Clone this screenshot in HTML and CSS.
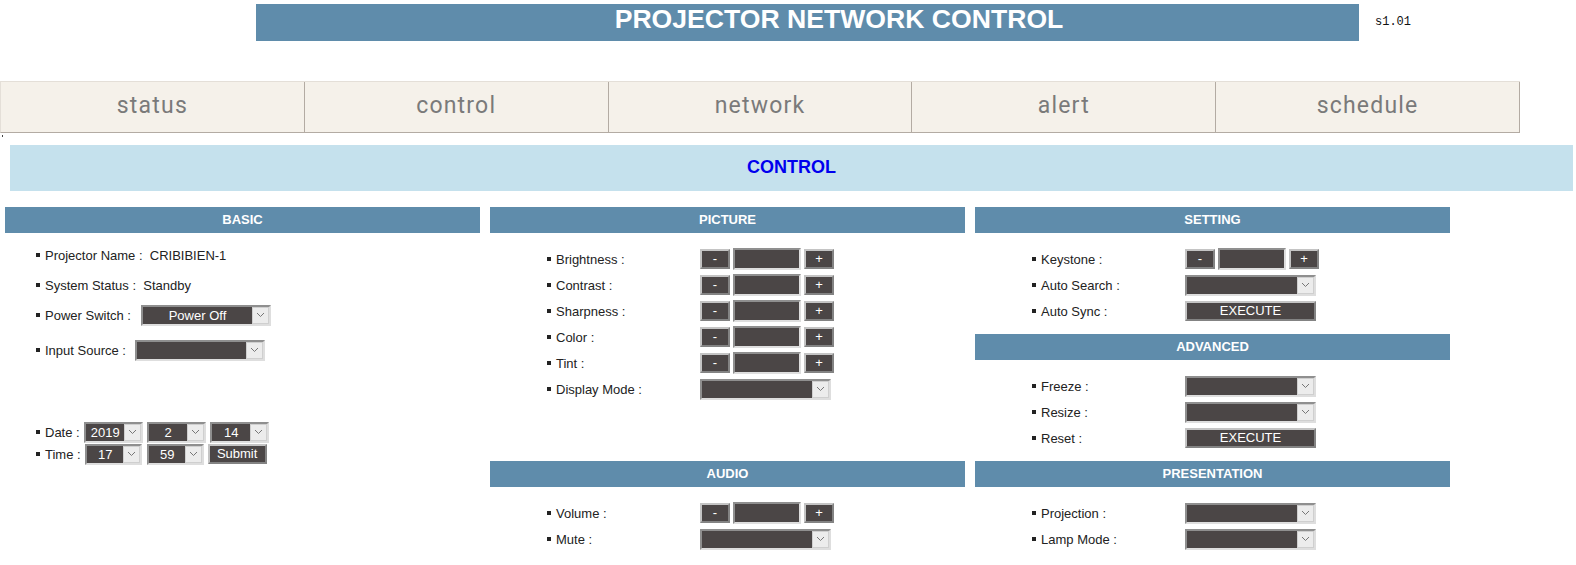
FILE: index.html
```html
<!DOCTYPE html>
<html>
<head>
<meta charset="utf-8">
<link rel="stylesheet" href="styles.css">
</head>
<body>
<div class="top">
  <div class="titlebar">PROJECTOR NETWORK CONTROL</div>
  <div class="ver">s1.01</div>
</div>

<div class="nav">
  <div class="tab">status</div>
  <div class="tab">control</div>
  <div class="tab">network</div>
  <div class="tab">alert</div>
  <div class="tab">schedule</div>
</div>
<div class="dotline"><span class="dot"></span></div>

<div class="pagebar">CONTROL</div>

<div class="panels">
  <section class="panel basic">
    <div class="ph">BASIC</div>
    <div class="bbody">
      <div class="brow"><span class="bul"></span>Projector Name :&nbsp; CRIBIBIEN-1</div>
      <div class="brow"><span class="bul"></span>System Status :&nbsp; Standby</div>
      <div class="brow"><span class="bul"></span>Power Switch :<span class="sel w130 ml10"><span class="sv">Power Off</span><span class="sa"><svg width="9" height="6" viewBox="0 0 9 6"><polyline points="1,1 4.5,4.5 8,1" fill="none" stroke="#777" stroke-width="1"/></svg></span></span></div>
      <div class="brow r4"><span class="bul"></span>Input Source :<span class="sel w130 ml9"><span class="sv"></span><span class="sa"><svg width="9" height="6" viewBox="0 0 9 6"><polyline points="1,1 4.5,4.5 8,1" fill="none" stroke="#777" stroke-width="1"/></svg></span></span></div>
      <div class="drow dfirst"><span class="bul"></span>Date :
        <span class="sel w59 ml4"><span class="sv">2019</span><span class="sa"><svg width="9" height="6" viewBox="0 0 9 6"><polyline points="1,1 4.5,4.5 8,1" fill="none" stroke="#777" stroke-width="1"/></svg></span></span>
        <span class="sel w59 ml4"><span class="sv">2</span><span class="sa"><svg width="9" height="6" viewBox="0 0 9 6"><polyline points="1,1 4.5,4.5 8,1" fill="none" stroke="#777" stroke-width="1"/></svg></span></span>
        <span class="sel w59 ml4"><span class="sv">14</span><span class="sa"><svg width="9" height="6" viewBox="0 0 9 6"><polyline points="1,1 4.5,4.5 8,1" fill="none" stroke="#777" stroke-width="1"/></svg></span></span>
      </div>
      <div class="drow"><span class="bul"></span>Time :
        <span class="sel w58 ml4"><span class="sv">17</span><span class="sa"><svg width="9" height="6" viewBox="0 0 9 6"><polyline points="1,1 4.5,4.5 8,1" fill="none" stroke="#777" stroke-width="1"/></svg></span></span>
        <span class="sel w58 ml5"><span class="sv">59</span><span class="sa"><svg width="9" height="6" viewBox="0 0 9 6"><polyline points="1,1 4.5,4.5 8,1" fill="none" stroke="#777" stroke-width="1"/></svg></span></span>
        <span class="btn submit ml4">Submit</span>
      </div>
    </div>
  </section>

  <section class="panel picture">
    <div class="ph">PICTURE</div>
    <div class="pbody">
      <div class="row"><span class="lab"><span class="bul"></span>Brightness :</span><span class="ctl"><span class="btn pm">-</span><span class="valbox"></span><span class="btn pm">+</span></span></div>
      <div class="row"><span class="lab"><span class="bul"></span>Contrast :</span><span class="ctl"><span class="btn pm">-</span><span class="valbox"></span><span class="btn pm">+</span></span></div>
      <div class="row"><span class="lab"><span class="bul"></span>Sharpness :</span><span class="ctl"><span class="btn pm">-</span><span class="valbox"></span><span class="btn pm">+</span></span></div>
      <div class="row"><span class="lab"><span class="bul"></span>Color :</span><span class="ctl"><span class="btn pm">-</span><span class="valbox"></span><span class="btn pm">+</span></span></div>
      <div class="row"><span class="lab"><span class="bul"></span>Tint :</span><span class="ctl"><span class="btn pm">-</span><span class="valbox"></span><span class="btn pm">+</span></span></div>
      <div class="row"><span class="lab"><span class="bul"></span>Display Mode :</span><span class="ctl"><span class="sel w131"><span class="sv"></span><span class="sa"><svg width="9" height="6" viewBox="0 0 9 6"><polyline points="1,1 4.5,4.5 8,1" fill="none" stroke="#777" stroke-width="1"/></svg></span></span></span></div>
    </div>
  </section>

  <div class="stack">
    <section class="panel">
      <div class="ph">SETTING</div>
      <div class="pbody">
        <div class="row"><span class="lab"><span class="bul"></span>Keystone :</span><span class="ctl"><span class="btn pm">-</span><span class="valbox"></span><span class="btn pm">+</span></span></div>
        <div class="row"><span class="lab"><span class="bul"></span>Auto Search :</span><span class="ctl"><span class="sel w131"><span class="sv"></span><span class="sa"><svg width="9" height="6" viewBox="0 0 9 6"><polyline points="1,1 4.5,4.5 8,1" fill="none" stroke="#777" stroke-width="1"/></svg></span></span></span></div>
        <div class="row"><span class="lab"><span class="bul"></span>Auto Sync :</span><span class="ctl"><span class="btn exec">EXECUTE</span></span></div>
      </div>
    </section>
    <section class="panel">
      <div class="ph">ADVANCED</div>
      <div class="pbody">
        <div class="row"><span class="lab"><span class="bul"></span>Freeze :</span><span class="ctl"><span class="sel w131"><span class="sv"></span><span class="sa"><svg width="9" height="6" viewBox="0 0 9 6"><polyline points="1,1 4.5,4.5 8,1" fill="none" stroke="#777" stroke-width="1"/></svg></span></span></span></div>
        <div class="row"><span class="lab"><span class="bul"></span>Resize :</span><span class="ctl"><span class="sel w131"><span class="sv"></span><span class="sa"><svg width="9" height="6" viewBox="0 0 9 6"><polyline points="1,1 4.5,4.5 8,1" fill="none" stroke="#777" stroke-width="1"/></svg></span></span></span></div>
        <div class="row"><span class="lab"><span class="bul"></span>Reset :</span><span class="ctl"><span class="btn exec">EXECUTE</span></span></div>
      </div>
    </section>
  </div>

  <section class="panel">
    <div class="ph">AUDIO</div>
    <div class="pbody">
      <div class="row"><span class="lab"><span class="bul"></span>Volume :</span><span class="ctl"><span class="btn pm">-</span><span class="valbox"></span><span class="btn pm">+</span></span></div>
      <div class="row"><span class="lab"><span class="bul"></span>Mute :</span><span class="ctl"><span class="sel w131"><span class="sv"></span><span class="sa"><svg width="9" height="6" viewBox="0 0 9 6"><polyline points="1,1 4.5,4.5 8,1" fill="none" stroke="#777" stroke-width="1"/></svg></span></span></span></div>
    </div>
  </section>

  <section class="panel">
    <div class="ph">PRESENTATION</div>
    <div class="pbody">
      <div class="row"><span class="lab"><span class="bul"></span>Projection :</span><span class="ctl"><span class="sel w131"><span class="sv"></span><span class="sa"><svg width="9" height="6" viewBox="0 0 9 6"><polyline points="1,1 4.5,4.5 8,1" fill="none" stroke="#777" stroke-width="1"/></svg></span></span></span></div>
      <div class="row"><span class="lab"><span class="bul"></span>Lamp Mode :</span><span class="ctl"><span class="sel w131"><span class="sv"></span><span class="sa"><svg width="9" height="6" viewBox="0 0 9 6"><polyline points="1,1 4.5,4.5 8,1" fill="none" stroke="#777" stroke-width="1"/></svg></span></span></span></div>
    </div>
  </section>
</div>
</body>
</html>
```

FILE: styles.css
```css
html, body {
  margin: 0;
  padding: 0;
  background: #fff;
  font-family: "Liberation Sans", Arial, sans-serif;
  font-size: 13px;
  color: #222;
  overflow: hidden;
}

.top {
  display: flex;
  align-items: center;
  padding-top: 4px;
  padding-left: 256px;
}
.titlebar {
  width: 1103px;
  height: 37px;
  background: #5f8cab;
  color: #fff;
  font-weight: bold;
  font-size: 26.6px;
  line-height: 30px;
  text-align: center;
  box-sizing: border-box;
  padding-left: 63px;
}
.ver {
  margin-left: 16px;
  font-family: "Liberation Mono", monospace;
  font-size: 12px;
  color: #111;
  padding-bottom: 1px;
}

.nav {
  display: flex;
  width: 1520px;
  margin-top: 40px;
  background: #f5f1ea;
  border-top: 1px solid #e4dfd8;
  border-bottom: 1px solid #b3aba3;
  border-left: 1px solid #e4dfd8;
  box-sizing: border-box;
}
.tab {
  flex: 1;
  height: 50px;
  line-height: 47px;
  text-align: center;
  font-family: Roboto, "Liberation Sans", sans-serif;
  font-size: 23px;
  letter-spacing: 1.2px;
  color: #7a7a7a;
  border-right: 1px solid #b3aba3;
}

.dotline {
  height: 12px;
  position: relative;
}
.dot {
  position: absolute;
  left: 2px;
  top: 2px;
  width: 1px;
  height: 2px;
  background: #444;
}

.pagebar {
  margin: 0 3px 0 10px;
  height: 46px;
  line-height: 44px;
  background: #c5e1ed;
  color: #0000ee;
  font-weight: bold;
  font-size: 18px;
  text-align: center;
}

.panels {
  display: grid;
  grid-template-columns: 475px 475px 475px;
  grid-template-rows: 244px auto;
  column-gap: 10px;
  row-gap: 10px;
  margin: 16px 0 0 5px;
}
.basic {
  grid-row: 1 / span 2;
}
.stack {
  display: flex;
  flex-direction: column;
  gap: 10px;
}

.ph {
  height: 26px;
  line-height: 25px;
  background: #5f8cab;
  color: #fff;
  font-weight: bold;
  font-size: 13px;
  text-align: center;
}

.bul {
  display: inline-block;
  width: 4px;
  height: 4px;
  background: #222;
  margin-right: 5px;
}

/* basic */
.bbody {
  padding: 7px 0 0 31px;
}
.brow {
  height: 30px;
  display: flex;
  align-items: center;
}
.r4 {
  margin-top: 5px;
}
.drow {
  height: 22px;
  display: flex;
  align-items: center;
}
.dfirst {
  margin-top: 56px;
}
.ml4 { margin-left: 4px; }
.ml5 { margin-left: 5px; }
.ml9 { margin-left: 9px; }
.ml10 { margin-left: 10px; }

/* panels with label/control rows */
.pbody {
  padding: 13px 0 0 57px;
}
.row {
  height: 26px;
  display: flex;
  align-items: center;
}
.lab {
  width: 153px;
  display: flex;
  align-items: center;
}
.ctl {
  display: flex;
  align-items: center;
}

/* controls */
.sel {
  display: inline-flex;
  height: 21px;
  box-sizing: border-box;
  border: 2px solid;
  border-color: #8f8f8f #dedede #dedede #8f8f8f;
  background: #4b4646;
}
.sv {
  flex: 1;
  color: #fff;
  text-align: center;
  font-size: 13px;
  line-height: 17px;
}
.sa {
  width: 17px;
  background: #ececec;
  border: 1px solid #cfcfcf;
  box-sizing: border-box;
  display: flex;
  align-items: center;
  justify-content: center;
}
.w130 { width: 130px; }
.w131 { width: 131px; }
.w59 { width: 59px; }
.w58 { width: 57px; }
.w59 .sv, .w58 .sv { padding-left: 1px; }

.btn {
  display: inline-block;
  box-sizing: border-box;
  background: #4b4646;
  color: #fff;
  text-align: center;
  border: 2px solid;
  border-color: #c4c4c4 #838383 #838383 #c4c4c4;
}
.pm {
  width: 30px;
  height: 20px;
  line-height: 16px;
  font-size: 13px;
}
.valbox {
  display: inline-block;
  width: 68px;
  height: 22px;
  box-sizing: border-box;
  background: #4b4646;
  border: 2px solid;
  border-color: #8f8f8f #dedede #dedede #8f8f8f;
  margin: 0 3px;
}
.exec {
  width: 131px;
  height: 20px;
  line-height: 16px;
  font-size: 13px;
}
.submit {
  width: 59px;
  height: 20px;
  line-height: 16px;
  font-size: 13px;
}
```
